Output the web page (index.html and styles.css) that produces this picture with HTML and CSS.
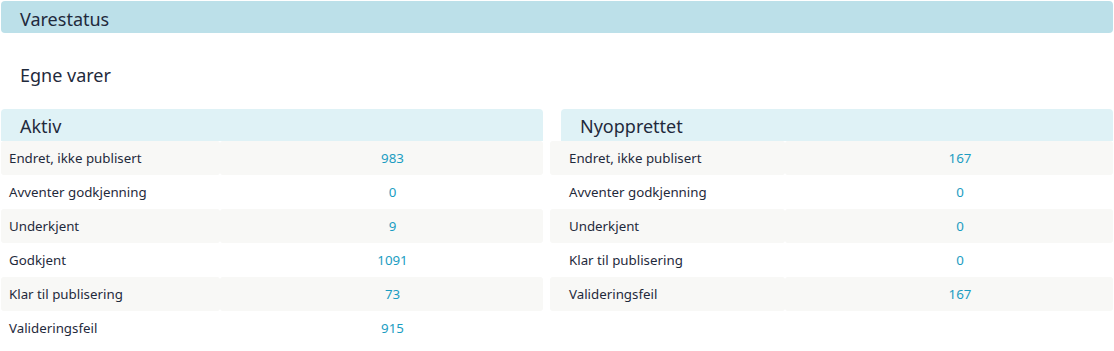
FILE: index.html
```html
<!DOCTYPE html>
<html lang="no">
<head>
<meta charset="utf-8">
<title>Varestatus</title>
<link rel="stylesheet" href="styles.css">
</head>
<body>
<div class="page">
  <div class="titlebar">Varestatus</div>
  <h2 class="subtitle">Egne varer</h2>
  <div class="panels">
    <section class="panel panel-left">
      <div class="panel-head">Aktiv</div>
      <div class="rows">
        <div class="row"><div class="label">Endret, ikke publisert</div><div class="num">983</div></div>
        <div class="row"><div class="label">Avventer godkjenning</div><div class="num">0</div></div>
        <div class="row"><div class="label">Underkjent</div><div class="num">9</div></div>
        <div class="row"><div class="label">Godkjent</div><div class="num">1091</div></div>
        <div class="row"><div class="label">Klar til publisering</div><div class="num">73</div></div>
        <div class="row"><div class="label">Valideringsfeil</div><div class="num">915</div></div>
      </div>
    </section>
    <section class="panel panel-right">
      <div class="panel-head">Nyopprettet</div>
      <div class="rows">
        <div class="row"><div class="label">Endret, ikke publisert</div><div class="num">167</div></div>
        <div class="row"><div class="label">Avventer godkjenning</div><div class="num">0</div></div>
        <div class="row"><div class="label">Underkjent</div><div class="num">0</div></div>
        <div class="row"><div class="label">Klar til publisering</div><div class="num">0</div></div>
        <div class="row"><div class="label">Valideringsfeil</div><div class="num">167</div></div>
      </div>
    </section>
  </div>
</div>
</body>
</html>
```
FILE: styles.css
```css
* { box-sizing: border-box; }
html, body { margin: 0; padding: 0; background: #ffffff; }
body {
  font-family: "Noto Sans", "Open Sans", sans-serif;
  color: #1f2a3c;
}
.page { padding: 1px; }
.titlebar {
  height: 32px;
  background: #bce0e9;
  border-radius: 4px;
  padding: 6px 0 0 19px;
  font-size: 18px;
  line-height: 24px;
}
.subtitle {
  margin: 30px 0 22px 19px;
  font-size: 18px;
  line-height: 24px;
  font-weight: normal;
}
.panels {
  display: grid;
  grid-template-columns: 542px 563px;
  column-gap: 7px;
  align-items: start;
}
.panel-head {
  height: 32px;
  background: #dff2f6;
  border-radius: 4px 4px 0 0;
  padding: 5px 0 0 19px;
  font-size: 18px;
  line-height: 24px;
}
.panel-right .panel-head { margin-left: 11px; }
.row {
  display: grid;
  height: 34px;
  font-size: 13.3px;
  line-height: 34px;
}
.panel-left .row { grid-template-columns: 219px 1fr; }
.panel-right .row { grid-template-columns: 235px 1fr; }
.row:nth-child(odd) .label,
.row:nth-child(odd) .num { background: #f8f8f6; }
.label {
  padding-left: 8px;
  border-radius: 3px;
  white-space: nowrap;
}
.panel-right .label { padding-left: 19px; }
.num {
  padding-left: 22px;
  text-align: center;
  color: #1b9dc2;
  border-radius: 3px;
}
```
